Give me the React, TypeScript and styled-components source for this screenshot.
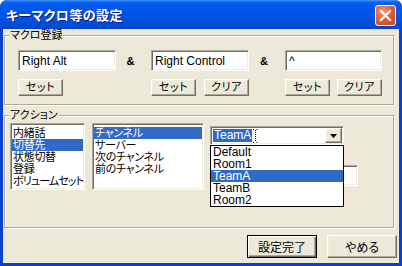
import React from 'react';
import styled, { createGlobalStyle, css } from 'styled-components';

const FONT = `"Liberation Sans", "Noto Sans CJK JP", sans-serif`;

const GlobalStyle = createGlobalStyle`
  html, body {
    margin: 0;
    padding: 0;
    background: #ffffff;
  }
  * {
    box-sizing: border-box;
  }
`;

const raised = css`
  background: #ece9d8;
  border: 1px solid;
  border-color: #ffffff #716f64 #716f64 #ffffff;
  box-shadow: inset -1px -1px 0 #aca899, inset 1px 1px 0 #f1efe2;
`;

const sunken = css`
  background: #ffffff;
  border: 1px solid;
  border-color: #aca899 #ffffff #ffffff #aca899;
  box-shadow: inset 1px 1px 0 #716f64, inset -1px -1px 0 #f1efe2;
`;

const Window = styled.div`
  width: 402px;
  height: 266px;
  display: flex;
  flex-direction: column;
  background: #0a3fd0;
  border-radius: 7px 7px 0 0;
  font-family: ${FONT};
  font-size: 12px;
  font-feature-settings: "palt";
  color: #000000;
  overflow: hidden;
`;

const TitleBar = styled.div`
  height: 29px;
  flex: none;
  display: flex;
  align-items: center;
  justify-content: space-between;
  padding: 0 6px 0 6px;
  background: linear-gradient(
    to bottom,
    #4a95ff 0,
    #0a64ee 2px,
    #0058ee 5px,
    #0055e5 14px,
    #0050dc 22px,
    #0045c8 29px
  );
`;

const Title = styled.span`
  color: #ffffff;
  font-weight: bold;
  font-size: 13px;
  letter-spacing: 0.4px;
  text-shadow: 1px 1px 0 #0a1a8a;
`;

const CloseButton = styled.div`
  width: 21px;
  height: 21px;
  margin-top: 1px;
  border: 1px solid #ffffff;
  border-radius: 3px;
  background: radial-gradient(circle at 35% 30%, #f29a7c 0, #e0603a 45%, #c8401c 100%);
  display: flex;
  align-items: center;
  justify-content: center;
`;

const Client = styled.div`
  flex: 1;
  margin: 0 3px 3px;
  background: #ece9d8;
  display: flex;
  flex-direction: column;
  padding: 6px 5px 0 1px;
`;

const GroupBox = styled.div<{ $height: number; $gap?: number }>`
  height: ${p => p.$height}px;
  margin-top: ${p => p.$gap ?? 0}px;
  border: 1px solid #aca899;
  box-shadow: inset 1px 1px 0 #ffffff, 1px 1px 0 #ffffff;
  display: flex;
  flex-direction: column;
  align-items: flex-start;
`;

const Caption = styled.div`
  margin: -7px 0 0 4px;
  padding: 0 1px;
  height: 12px;
  line-height: 12px;
  font-size: 11px;
  background: #ece9d8;
  white-space: nowrap;
`;

const MacroGrid = styled.div`
  margin: 9px 0 0 13px;
  display: grid;
  grid-template-columns: 98px 35px 98px 36px 97px;
  grid-template-rows: 21px 17px;
  row-gap: 8px;
`;

const TextBox = styled.div<{ $width?: number; $gap?: number }>`
  ${sunken};
  width: ${p => (p.$width ? `${p.$width}px` : 'auto')};
  margin-top: ${p => p.$gap ?? 0}px;
  height: 21px;
  padding: 3px 3px 0 3px;
  line-height: 14px;
  white-space: nowrap;
`;

const Amp = styled.div`
  display: flex;
  align-items: center;
  justify-content: center;
  font-weight: bold;
  font-size: 11px;
  padding-right: 6px;
`;

const ButtonPair = styled.div`
  display: flex;
  justify-content: space-between;
`;

const SmallButton = styled.div`
  ${raised};
  width: 45px;
  height: 17px;
  display: flex;
  align-items: center;
  justify-content: center;
  font-size: 11px;
  line-height: 11px;
  letter-spacing: 0.5px;
`;

const ActionRow = styled.div`
  margin: 2px 0 0 5px;
  display: flex;
  align-items: flex-start;
`;

const ListBox = styled.div<{ $width: number; $gap?: number }>`
  ${sunken};
  width: ${p => p.$width}px;
  height: 67px;
  margin-left: ${p => p.$gap ?? 0}px;
  padding: 3px 1px 1px;
  display: flex;
  flex-direction: column;
  overflow: hidden;
`;

const ListItem = styled.div<{ $selected?: boolean; $tight?: boolean }>`
  height: 12px;
  line-height: 12px;
  padding-left: 1px;
  font-size: 11px;
  letter-spacing: ${p => (p.$tight ? '-0.9px' : '-0.3px')};
  white-space: nowrap;
  background: ${p => (p.$selected ? '#316ac5' : 'transparent')};
  color: ${p => (p.$selected ? '#ffffff' : '#000000')};
`;

const ComboColumn = styled.div`
  margin: 3px 0 0 6px;
  display: flex;
  flex-direction: column;
  width: 148px;
`;

const Combo = styled.div`
  ${sunken};
  position: relative;
  width: 134px;
  height: 19px;
  padding: 1px;
  display: flex;
  align-items: center;
`;

const ComboText = styled.span`
  margin-left: 1px;
  height: 13px;
  line-height: 13px;
  padding: 0 1px;
  background: #316ac5;
  color: #ffffff;
`;

const ArrowButton = styled.div`
  ${raised};
  margin-left: auto;
  width: 17px;
  height: 15px;
  display: flex;
  align-items: center;
  justify-content: center;
`;

const DropList = styled.div`
  position: absolute;
  top: calc(100% + 1px);
  left: -1px;
  width: 134px;
  border: 1px solid #000000;
  background: #ffffff;
  z-index: 2;
`;

const DropItem = styled.div<{ $selected?: boolean }>`
  height: 12px;
  line-height: 12px;
  padding-left: 2px;
  white-space: nowrap;
  background: ${p => (p.$selected ? '#316ac5' : 'transparent')};
  color: ${p => (p.$selected ? '#ffffff' : '#000000')};
`;

const ButtonRow = styled.div`
  margin: 7px -3px 0 0;
  display: flex;
  justify-content: flex-end;
  gap: 10px;
`;

const DialogButton = styled.div<{ $default?: boolean }>`
  width: 70px;
  height: 23px;
  display: flex;
  align-items: center;
  justify-content: center;
  ${p =>
    p.$default
      ? css`
          background: #ece9d8;
          border: 1px solid #000000;
          box-shadow: inset 1px 1px 0 #ffffff, inset -1px -1px 0 #716f64, inset -2px -2px 0 #aca899;
        `
      : raised};
`;

const IBeam = () => (
  <svg width="5" height="14" viewBox="0 0 5 14" style={{ marginLeft: 1 }}>
    <path
      d="M0 0.5h1.5M3.5 0.5h1.5M2.5 1v12M0 13.5h1.5M3.5 13.5h1.5"
      stroke="#000"
      strokeWidth="1"
      strokeDasharray="1 1"
      fill="none"
    />
  </svg>
);

const actions = ['内緒話', '切替先', '状態切替', '登録', 'ボリュームセット'];
const targets = ['チャンネル', 'サーバー', '次のチャンネル', '前のチャンネル'];
const rooms = ['Default', 'Room1', 'TeamA', 'TeamB', 'Room2'];

export default function App() {
  return (
    <>
      <GlobalStyle />
      <Window>
        <TitleBar>
          <Title>キーマクロ等の設定</Title>
          <CloseButton>
            <svg width="13" height="13" viewBox="0 0 13 13">
              <path d="M2 2L11 11M11 2L2 11" stroke="#ffffff" strokeWidth="2.2" strokeLinecap="square" />
            </svg>
          </CloseButton>
        </TitleBar>
        <Client>
          <GroupBox $height={70}>
            <Caption>マクロ登録</Caption>
            <MacroGrid>
              <TextBox>Right Alt</TextBox>
              <Amp>&amp;</Amp>
              <TextBox>Right Control</TextBox>
              <Amp>&amp;</Amp>
              <TextBox>^</TextBox>
              <ButtonPair>
                <SmallButton>セット</SmallButton>
              </ButtonPair>
              <span />
              <ButtonPair>
                <SmallButton>セット</SmallButton>
                <SmallButton>クリア</SmallButton>
              </ButtonPair>
              <span />
              <ButtonPair>
                <SmallButton>セット</SmallButton>
                <SmallButton>クリア</SmallButton>
              </ButtonPair>
            </MacroGrid>
          </GroupBox>
          <GroupBox $height={113} $gap={10}>
            <Caption>アクション</Caption>
            <ActionRow>
              <ListBox $width={75}>
                {actions.map(a => (
                  <ListItem key={a} $selected={a === '切替先'} $tight={a.length > 6}>
                    {a}
                  </ListItem>
                ))}
              </ListBox>
              <ListBox $width={112} $gap={7}>
                {targets.map(t => (
                  <ListItem key={t} $selected={t === 'チャンネル'}>{t}</ListItem>
                ))}
              </ListBox>
              <ComboColumn>
                <Combo>
                  <ComboText>TeamA</ComboText>
                  <IBeam />
                  <ArrowButton>
                    <svg width="7" height="4" viewBox="0 0 7 4">
                      <path d="M0 0h7L3.5 4z" fill="#000" />
                    </svg>
                  </ArrowButton>
                  <DropList>
                    {rooms.map(r => (
                      <DropItem key={r} $selected={r === 'TeamA'}>{r}</DropItem>
                    ))}
                  </DropList>
                </Combo>
                <TextBox $width={148} $gap={20} />
              </ComboColumn>
            </ActionRow>
          </GroupBox>
          <ButtonRow>
            <DialogButton $default>設定完了</DialogButton>
            <DialogButton>やめる</DialogButton>
          </ButtonRow>
        </Client>
      </Window>
    </>
  );
}
